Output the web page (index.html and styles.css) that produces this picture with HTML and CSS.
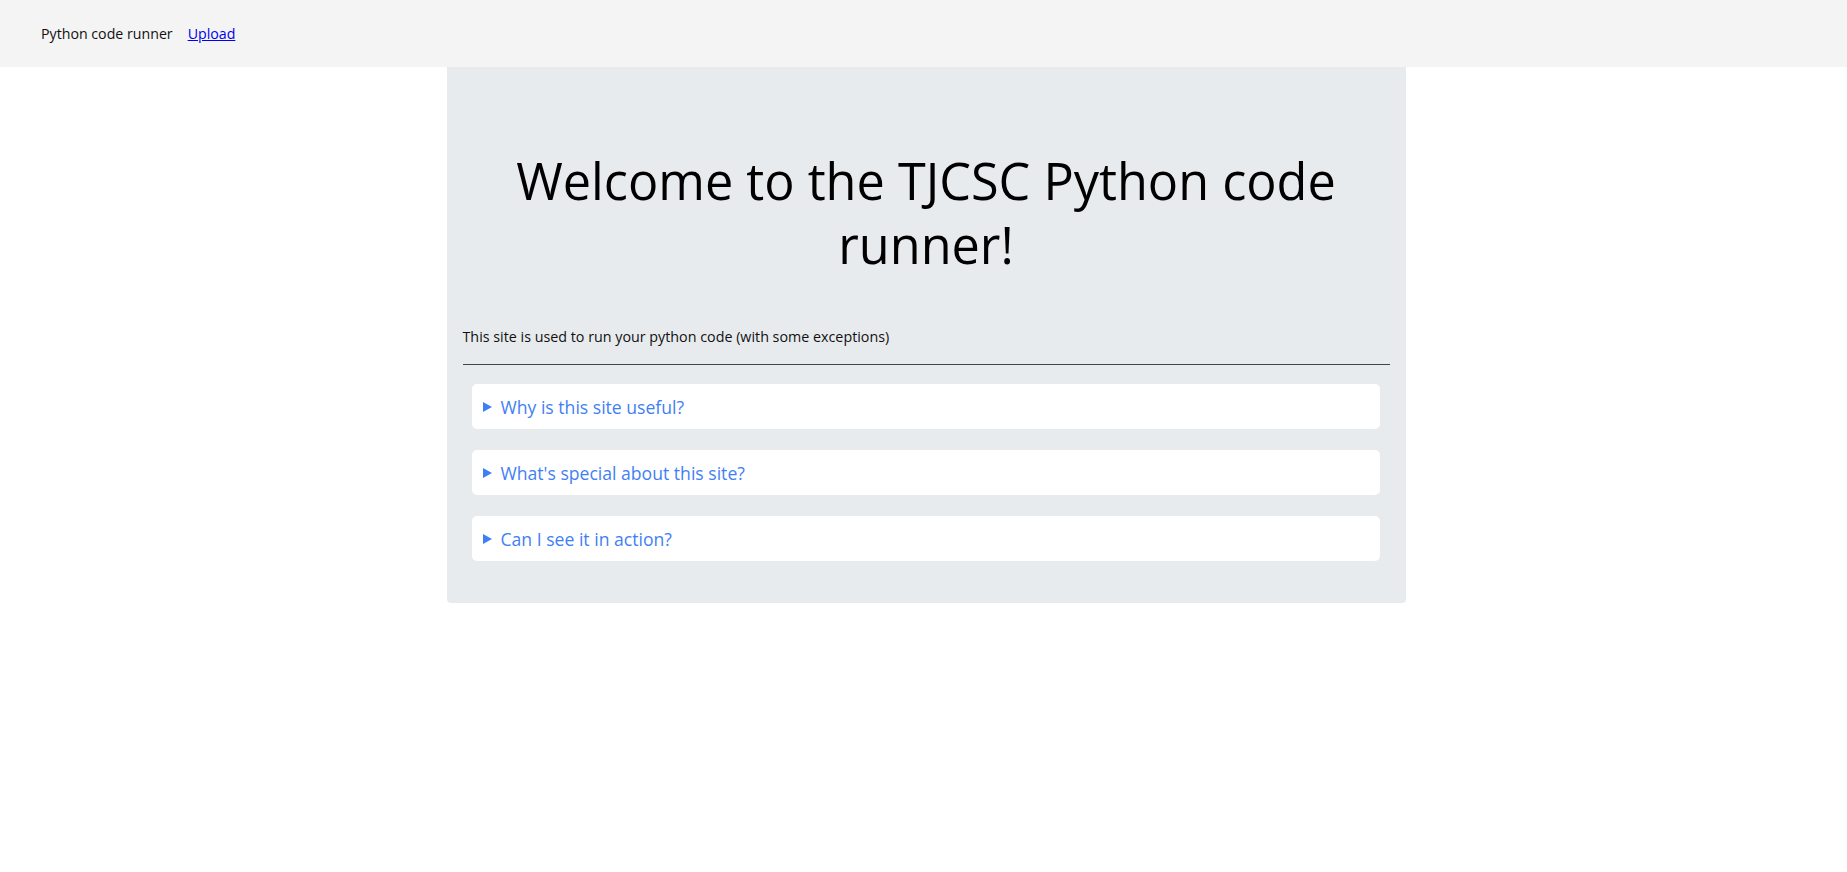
FILE: index.html
```html
<!DOCTYPE html>
<html lang="en">
<head>
<meta charset="utf-8">
<title>Python code runner</title>
<link rel="stylesheet" href="styles.css">
</head>
<body>
<header class="topbar">
  <span class="brand">Python code runner</span>
  <a class="nav-link" href="#">Upload</a>
</header>
<main class="jumbo">
  <h1 class="title">Welcome to the TJCSC Python code runner!</h1>
  <p class="lead">This site is used to run your python code (with some exceptions)</p>
  <hr class="rule">
  <div class="faq">
    <details class="faq-item">
      <summary class="faq-q">Why is this site useful?</summary>
    </details>
    <details class="faq-item">
      <summary class="faq-q">What's special about this site?</summary>
    </details>
    <details class="faq-item">
      <summary class="faq-q">Can I see it in action?</summary>
    </details>
  </div>
</main>
</body>
</html>
```
FILE: styles.css
```css
* { box-sizing: border-box; }
html, body { margin: 0; padding: 0; }
body {
  font-family: "Open Sans", "Noto Sans", sans-serif;
  color: #111;
  background: #fff;
}
.topbar {
  height: 67px;
  background: #f4f4f4;
  display: flex;
  align-items: center;
  gap: 15px;
  padding: 0 0 0 41px;
  font-size: 14.2px;
}
.brand { color: #111; }
.nav-link { color: #0000ee; text-decoration: underline; }
.jumbo {
  width: 959px;
  margin-left: calc(50% - 477px);
  background: #e8ebee;
  border-radius: 0 0 4px 4px;
  padding: 82px 16px 42px;
}
.title {
  margin: 0;
  text-align: center;
  font-weight: 400;
  font-size: 50.4px;
  line-height: 64px;
  color: #000;
}
.lead {
  margin: 48px 0 0;
  font-size: 14.3px;
  line-height: 24px;
  color: #111;
}
.rule {
  margin: 15px 0 0;
  border: 0;
  border-top: 1px solid #444;
  height: 0;
}
.faq {
  padding: 19px 10px 0 9px;
  display: flex;
  flex-direction: column;
  gap: 21px;
}
.faq-item {
  background: #fff;
  border-radius: 5px;
}
.faq-q {
  list-style: none;
  display: flex;
  align-items: center;
  gap: 9px;
  height: 45px;
  padding: 0 11px;
  font-size: 17.6px;
  color: #3f7ff5;
  cursor: pointer;
}
.faq-q::-webkit-details-marker { display: none; }
.faq-q::before {
  content: "";
  display: block;
  flex-shrink: 0;
  width: 0;
  height: 0;
  border-left: 9px solid #3f7ff5;
  border-top: 5px solid transparent;
  border-bottom: 5px solid transparent;
}
```
